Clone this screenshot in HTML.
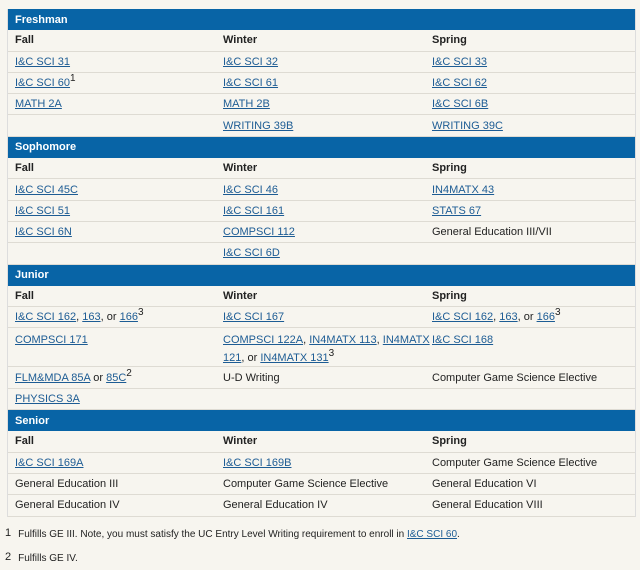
<!DOCTYPE html>
<html><head><meta charset="utf-8"><style>
body{margin:0;background:#f7f5ef;font-family:"Liberation Sans",Arial,sans-serif;font-size:11px;color:#222;width:640px;height:570px;overflow:hidden;position:relative}
.t{position:absolute;left:7px;top:9px;width:627px;border-left:1px solid #ddd;border-right:1px solid #ddd}
.r{height:21.3px;box-sizing:border-box;border-bottom:1px solid #dedbd3;display:flex;align-items:center;position:relative}
.r.d{height:39px;align-items:flex-start;padding-top:3px;line-height:18px}
.h{background:#0864a6;color:#fff;font-weight:bold;padding-left:7px;border-bottom:none}
.c{position:absolute;top:0;height:100%;display:flex;align-items:center;white-space:nowrap}
.d .c{align-items:flex-start;padding-top:3px}
.c1{left:7px}.c2{left:215px}.c3{left:424px}
.b{font-weight:bold}
a{color:#1d5c94;text-decoration:underline}
sup{font-size:10px;vertical-align:5px;line-height:0}
.fn{position:absolute;left:5px;font-size:10px}
.fn span{margin-right:7px;font-size:11px;position:relative;top:-1px}
</style></head><body>
<div class="t">
<div class="r h">Freshman</div>
<div class="r b"><div class="c c1">Fall</div><div class="c c2">Winter</div><div class="c c3">Spring</div></div>
<div class="r"><div class="c c1"><a>I&amp;C SCI 31</a></div><div class="c c2"><a>I&amp;C SCI 32</a></div><div class="c c3"><a>I&amp;C SCI 33</a></div></div>
<div class="r"><div class="c c1"><span><a>I&amp;C SCI 60</a><sup>1</sup></span></div><div class="c c2"><a>I&amp;C SCI 61</a></div><div class="c c3"><a>I&amp;C SCI 62</a></div></div>
<div class="r"><div class="c c1"><a>MATH 2A</a></div><div class="c c2"><a>MATH 2B</a></div><div class="c c3"><a>I&amp;C SCI 6B</a></div></div>
<div class="r"><div class="c c2"><a>WRITING 39B</a></div><div class="c c3"><a>WRITING 39C</a></div></div>
<div class="r h">Sophomore</div>
<div class="r b"><div class="c c1">Fall</div><div class="c c2">Winter</div><div class="c c3">Spring</div></div>
<div class="r"><div class="c c1"><a>I&amp;C SCI 45C</a></div><div class="c c2"><a>I&amp;C SCI 46</a></div><div class="c c3"><a>IN4MATX 43</a></div></div>
<div class="r"><div class="c c1"><a>I&amp;C SCI 51</a></div><div class="c c2"><a>I&amp;C SCI 161</a></div><div class="c c3"><a>STATS 67</a></div></div>
<div class="r"><div class="c c1"><a>I&amp;C SCI 6N</a></div><div class="c c2"><a>COMPSCI 112</a></div><div class="c c3">General Education III/VII</div></div>
<div class="r"><div class="c c2"><a>I&amp;C SCI 6D</a></div></div>
<div class="r h">Junior</div>
<div class="r b"><div class="c c1">Fall</div><div class="c c2">Winter</div><div class="c c3">Spring</div></div>
<div class="r"><div class="c c1"><span><a>I&amp;C SCI 162</a>, <a>163</a>, or <a>166</a><sup>3</sup></span></div><div class="c c2"><a>I&amp;C SCI 167</a></div><div class="c c3"><span><a>I&amp;C SCI 162</a>, <a>163</a>, or <a>166</a><sup>3</sup></span></div></div>
<div class="r d"><div class="c c1"><a>COMPSCI 171</a></div><div class="c c2"><span><a>COMPSCI 122A</a>, <a>IN4MATX 113</a>, <a>IN4MATX</a><br><a>121</a>, or <a>IN4MATX 131</a><sup>3</sup></span></div><div class="c c3"><a>I&amp;C SCI 168</a></div></div>
<div class="r"><div class="c c1"><span><a>FLM&amp;MDA 85A</a> or <a>85C</a><sup>2</sup></span></div><div class="c c2">U-D Writing</div><div class="c c3">Computer Game Science Elective</div></div>
<div class="r"><div class="c c1"><a>PHYSICS 3A</a></div></div>
<div class="r h">Senior</div>
<div class="r b"><div class="c c1">Fall</div><div class="c c2">Winter</div><div class="c c3">Spring</div></div>
<div class="r"><div class="c c1"><a>I&amp;C SCI 169A</a></div><div class="c c2"><a>I&amp;C SCI 169B</a></div><div class="c c3">Computer Game Science Elective</div></div>
<div class="r"><div class="c c1">General Education III</div><div class="c c2">Computer Game Science Elective</div><div class="c c3">General Education VI</div></div>
<div class="r"><div class="c c1">General Education IV</div><div class="c c2">General Education IV</div><div class="c c3">General Education VIII</div></div>
</div>
<div class="fn" style="top:528px"><span>1</span>Fulfills GE III. Note, you must satisfy the UC Entry Level Writing requirement to enroll in <a>I&amp;C SCI 60</a>.</div>
<div class="fn" style="top:552px"><span>2</span>Fulfills GE IV.</div>
</body></html>
